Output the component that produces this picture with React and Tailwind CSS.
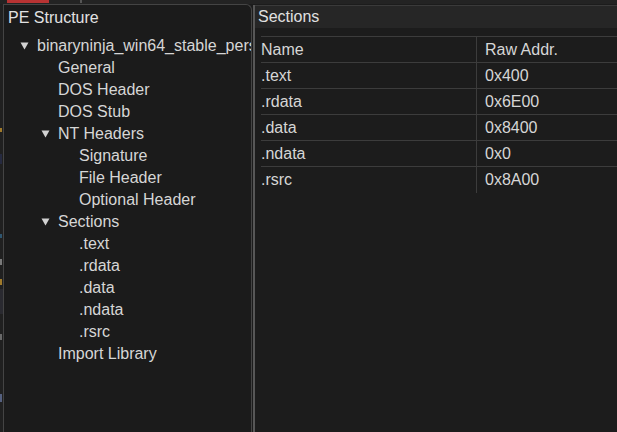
import React from "react";

const tree = [
  { label: "binaryninja_win64_stable_personal", depth: 0, arrow: true },
  { label: "General", depth: 1 },
  { label: "DOS Header", depth: 1 },
  { label: "DOS Stub", depth: 1 },
  { label: "NT Headers", depth: 1, arrow: true },
  { label: "Signature", depth: 2 },
  { label: "File Header", depth: 2 },
  { label: "Optional Header", depth: 2 },
  { label: "Sections", depth: 1, arrow: true },
  { label: ".text", depth: 2 },
  { label: ".rdata", depth: 2 },
  { label: ".data", depth: 2 },
  { label: ".ndata", depth: 2 },
  { label: ".rsrc", depth: 2 },
  { label: "Import Library", depth: 1 },
];

const rows = [
  [".text", "0x400"],
  [".rdata", "0x6E00"],
  [".data", "0x8400"],
  [".ndata", "0x0"],
  [".rsrc", "0x8A00"],
];

const pad = ["pl-[16px]", "pl-[37px]", "pl-[58px]"];

function Arrow() {
  return (
    <svg width="9" height="8" viewBox="0 0 9 8" className="shrink-0">
      <polygon points="0.5,0.5 8.5,0.5 4.5,7.5" fill="#d2d2d2" />
    </svg>
  );
}

export default function App() {
  return (
    <div
      className="w-[617px] h-[432px] bg-[#1c1c1c] overflow-hidden flex flex-col text-[16px] leading-none text-[#d6d6d6]"
      style={{ fontFamily: '"Liberation Sans", Arial, sans-serif' }}
    >
      {/* top strip */}
      <div className="h-[4px] shrink-0 bg-[#232323] flex">
        <div className="ml-[7px] w-[42px] h-[3px] bg-[#b83333]" />
        <div className="ml-[31px] w-[2px] h-[3px] bg-[#555]" />
      </div>
      <div className="flex flex-1 min-h-0">
        {/* background gutter */}
        <div className="w-[3px] shrink-0 bg-[#202020] relative">
          <div className="absolute left-0 top-[124px] w-[2px] h-[4px] bg-[#a07a2a]" />
          <div className="absolute left-0 top-[150px] w-[2px] h-[10px] bg-[#262a40]" />
          <div className="absolute left-0 top-[230px] w-[2px] h-[4px] bg-[#2f5670]" />
          <div className="absolute left-0 top-[255px] w-[2px] h-[6px] bg-[#7a7a7a]" />
          <div className="absolute left-0 top-[275px] w-[2px] h-[6px] bg-[#a07a2a]" />
          <div className="absolute left-0 top-[285px] w-[3px] h-[25px] bg-[#2a2a30]" />
          <div className="absolute left-0 top-[330px] w-[2px] h-[6px] bg-[#6a6a6a]" />
          <div className="absolute left-0 top-[390px] w-[2px] h-[8px] bg-[#55607f]" />
        </div>
        {/* left panel */}
        <div className="w-[249px] shrink-0 bg-[#1b1b1b] border-l border-t border-r border-[#444444] rounded-tr-[6px] flex flex-col">
          <div className="h-[25px] flex items-center pl-[4px] text-[#e2e2e2]">PE Structure</div>
          <div className="pt-[5px] flex flex-col">
            {tree.map((t, i) => (
              <div
                key={i}
                className={`h-[22px] flex items-center whitespace-nowrap overflow-hidden ${pad[t.depth]}`}
              >
                <div className="w-[17px] shrink-0 flex items-center">{t.arrow ? <Arrow /> : null}</div>
                <span>{t.label}</span>
              </div>
            ))}
          </div>
        </div>
        {/* splitter */}
        <div className="w-[3px] shrink-0 flex justify-center pt-[1px]">
          <div className="w-[2px] bg-[#575757]" />
        </div>
        {/* right panel */}
        <div className="flex-1 flex flex-col mt-[1px] border-t border-[#3a3a3a]">
          <div className="h-[22px] bg-[#262626] flex items-center pl-[3px] text-[#e0e0e0]">Sections</div>
          <div className="pt-[8px] pl-[6px]">
            <div className="border-t border-[#3c3c3c]">
              {[["Name", "Raw Addr."], ...rows].map((r, i) => (
                <div
                  key={i}
                  className={`flex h-[26px] ${i < rows.length ? "border-b border-[#3c3c3c]" : ""}`}
                >
                  <div className="w-[216px] shrink-0 border-r border-[#3c3c3c] flex items-center">
                    {r[0]}
                  </div>
                  <div className="flex-1 flex items-center pl-[8px]">{r[1]}</div>
                </div>
              ))}
            </div>
          </div>
        </div>
      </div>
    </div>
  );
}
